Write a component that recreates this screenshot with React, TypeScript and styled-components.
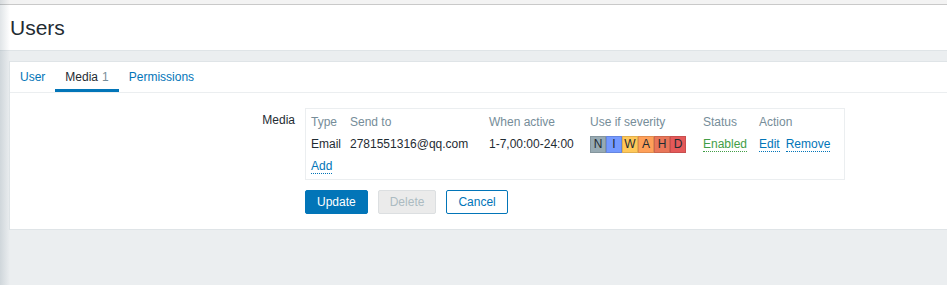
import React from 'react';
import styled, { createGlobalStyle } from 'styled-components';

const GlobalStyle = createGlobalStyle`
  html, body {
    margin: 0;
    padding: 0;
    background: #ebeef0;
    font-family: "Liberation Sans", Arial, sans-serif;
    font-size: 12px;
    color: #1f2c33;
  }
`;

const Page = styled.div`
  position: relative;
  min-height: 285px;
  background: #ebeef0;

  /* sidebar shadow along the left edge */
  &::before {
    content: '';
    position: absolute;
    left: 0;
    top: 0;
    bottom: 0;
    width: 10px;
    background: linear-gradient(to right, rgba(40, 70, 90, 0.14), rgba(40, 70, 90, 0));
    pointer-events: none;
  }
`;

const TopStrip = styled.div`
  height: 4px;
  background: #f3f3f3;
  border-bottom: 1px solid #c9c9c9;
`;

const Header = styled.header`
  height: 45px;
  background: #fff;
  border-bottom: 1px solid #dfe4e7;
  display: flex;
  align-items: center;
  padding: 0 10px;
`;

const Title = styled.h1`
  margin: 0;
  font-size: 21px;
  font-weight: normal;
  color: #1f2c33;
`;

const Wrapper = styled.main`
  padding: 10px 0 0 9px;
`;

const Card = styled.section`
  background: #fff;
  border: 1px solid #dfe4e7;
  border-right: none;
`;

const Tabs = styled.nav`
  display: flex;
  border-bottom: 1px solid #ebeef0;
`;

const Tab = styled.div<{ $active?: boolean }>`
  height: 30px;
  padding: 3px 10px 0;
  display: flex;
  align-items: center;
  box-sizing: border-box;
  color: ${({ $active }) => ($active ? '#1f2c33' : '#0275b8')};
  border-bottom: 3px solid ${({ $active }) => ($active ? '#0275b8' : 'transparent')};
`;

const Count = styled.span`
  color: #768d99;
  margin-left: 4px;
`;

const FormBody = styled.div`
  padding: 15px 0 15px 0;
`;

const FormRow = styled.div`
  display: grid;
  grid-template-columns: 285px auto;
  column-gap: 10px;
  align-items: start;
`;

const Label = styled.div`
  text-align: right;
  padding-top: 5px;
`;

const MediaBox = styled.div`
  width: 540px;
  box-sizing: border-box;
  border: 1px solid #ebeef0;
  padding: 2px 5px 2px;
`;

const Grid = styled.div`
  display: grid;
  grid-template-columns: 39px 139px 101px 113px 56px auto;
  grid-auto-rows: 22px;
  align-items: center;
`;

const Head = styled.div`
  color: #768d99;
`;

const Cell = styled.div``;

const Link = styled.a<{ $color?: string }>`
  color: ${({ $color }) => $color ?? '#0275b8'};
  text-decoration: none;
  border-bottom: 1px dotted ${({ $color }) => $color ?? '#0275b8'};
  cursor: pointer;
`;

const Actions = styled.div`
  display: flex;
  gap: 6px;
`;

const Severity = styled.div`
  display: flex;
  width: 96px;
`;

const Sev = styled.span<{ $bg: string }>`
  width: 16px;
  height: 17px;
  box-sizing: border-box;
  display: flex;
  align-items: center;
  justify-content: center;
  background: ${({ $bg }) => $bg};
  border: 1px solid rgba(0, 0, 0, 0.12);
  color: #1f2c33;
  font-size: 12px;
`;

const Buttons = styled.div`
  display: flex;
  gap: 10px;
  margin: 10px 0 0 295px;
`;

const Button = styled.button<{ $variant: 'primary' | 'disabled' | 'alt' }>`
  height: 24px;
  box-sizing: border-box;
  padding: 0 11px;
  font-family: inherit;
  font-size: 12px;
  border-radius: 2px;
  border: 1px solid
    ${({ $variant }) =>
      $variant === 'primary' ? '#0275b8' : $variant === 'disabled' ? '#dcdfe1' : '#0275b8'};
  background: ${({ $variant }) =>
    $variant === 'primary' ? '#0275b8' : $variant === 'disabled' ? '#ebebeb' : '#fff'};
  color: ${({ $variant }) =>
    $variant === 'primary' ? '#fff' : $variant === 'disabled' ? '#acbbc2' : '#0275b8'};
`;

const severities = [
  { l: 'N', c: '#97aab3' },
  { l: 'I', c: '#7499ff' },
  { l: 'W', c: '#ffc859' },
  { l: 'A', c: '#ffa059' },
  { l: 'H', c: '#e97659' },
  { l: 'D', c: '#e45959' },
];

export default function App() {
  return (
    <Page>
      <GlobalStyle />
      <TopStrip />
      <Header>
        <Title>Users</Title>
      </Header>
      <Wrapper>
        <Card>
          <Tabs>
            <Tab>User</Tab>
            <Tab $active>
              Media<Count>1</Count>
            </Tab>
            <Tab>Permissions</Tab>
          </Tabs>
          <FormBody>
            <FormRow>
              <Label>Media</Label>
              <MediaBox>
                <Grid>
                  <Head>Type</Head>
                  <Head>Send to</Head>
                  <Head>When active</Head>
                  <Head>Use if severity</Head>
                  <Head>Status</Head>
                  <Head>Action</Head>

                  <Cell>Email</Cell>
                  <Cell>2781551316@qq.com</Cell>
                  <Cell>1-7,00:00-24:00</Cell>
                  <Cell>
                    <Severity>
                      {severities.map((s) => (
                        <Sev key={s.l} $bg={s.c}>
                          {s.l}
                        </Sev>
                      ))}
                    </Severity>
                  </Cell>
                  <Cell>
                    <Link $color="#429e47">Enabled</Link>
                  </Cell>
                  <Cell>
                    <Actions>
                      <Link>Edit</Link>
                      <Link>Remove</Link>
                    </Actions>
                  </Cell>

                  <Cell>
                    <Link>Add</Link>
                  </Cell>
                </Grid>
              </MediaBox>
            </FormRow>
            <Buttons>
              <Button $variant="primary">Update</Button>
              <Button $variant="disabled">Delete</Button>
              <Button $variant="alt">Cancel</Button>
            </Buttons>
          </FormBody>
        </Card>
      </Wrapper>
    </Page>
  );
}
